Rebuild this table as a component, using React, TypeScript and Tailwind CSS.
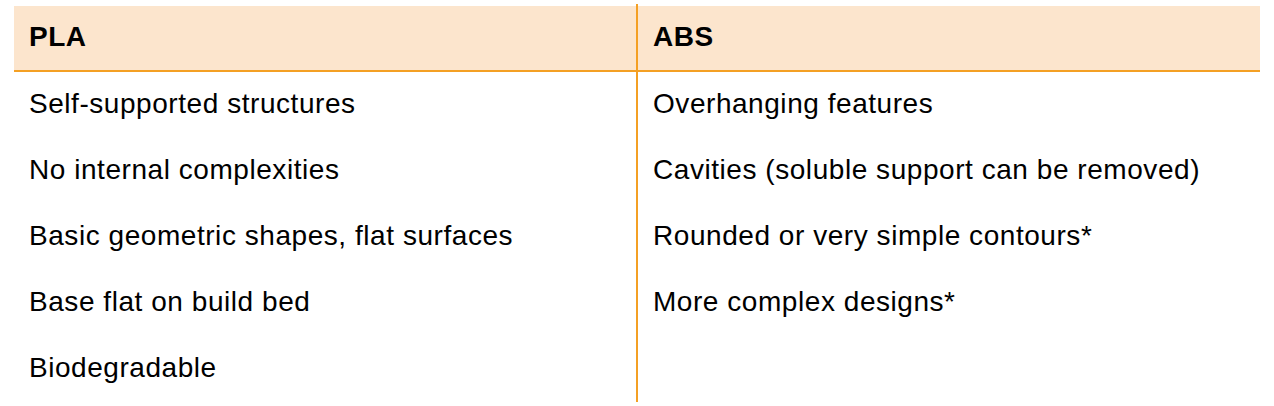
const pla = [
    "Self-supported structures",
    "No internal complexities",
    "Basic geometric shapes, flat surfaces",
    "Base flat on build bed",
    "Biodegradable",
];

const abs = [
    "Overhanging features",
    "Cavities (soluble support can be removed)",
    "Rounded or very simple contours*",
    "More complex designs*",
];

function Column({ title, items }: { title: string; items: string[] }) {
    return (
        <div className="mt-[2px] flex w-[622px] flex-col">
            <div className="border-b-2 border-[#f4a024] bg-[#fce5cd] px-[15px] pt-[16px] pb-[18px] text-[28px] font-bold leading-[30px] tracking-[0.5px]">
                {title}
            </div>
            {items.map((item) => (
                <div key={item} className="px-[15px] pt-[17px] pb-[19px] text-[28px] leading-[30px] tracking-[0.55px]">
                    {item}
                </div>
            ))}
        </div>
    );
}

export default function App() {
    return (
        <div
            className="h-[406px] w-[1274px] bg-white px-[14px] pt-[4px] text-black"
            style={{ fontFamily: '"Liberation Sans", Arial, sans-serif' }}
        >
            <div className="flex items-start">
                <Column title="PLA" items={pla} />
                <div className="w-[2px] self-stretch bg-[#f4a024]" />
                <Column title="ABS" items={abs} />
            </div>
        </div>
    );
}
